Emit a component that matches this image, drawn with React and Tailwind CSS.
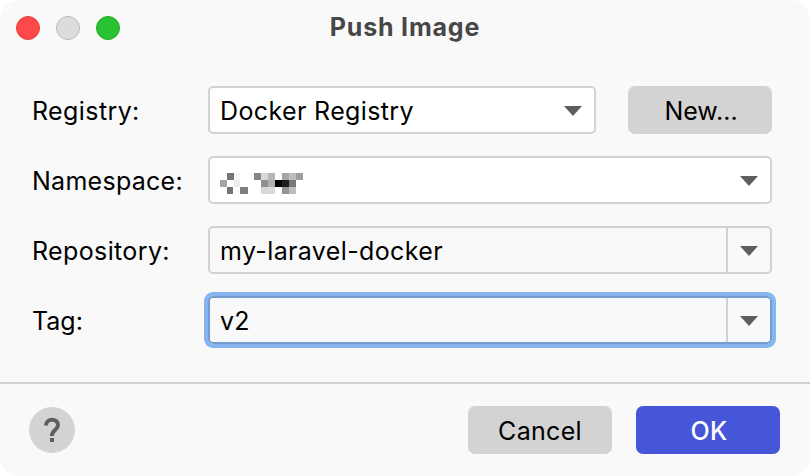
import React from 'react';

const mosaic = [
  [227, 173, 7, '#757575'], [234, 173, 6, '#f6f6f6'],
  [254, 173, 7, '#858585'], [261, 173, 7, '#d8d8d8'], [268, 173, 7, '#b5b5b5'],
  [282, 173, 7, '#a6a6a6'], [289, 173, 7, '#bdbdbd'], [296, 173, 7, '#9e9e9e'],
  [220, 180, 7, '#a5a5a5'], [234, 180, 6, '#ebebeb'],
  [261, 180, 7, '#909090'], [268, 180, 7, '#b0b0b0'], [275, 180, 7, '#000000'],
  [282, 180, 7, '#1c1c1c'], [289, 180, 7, '#777777'],
  [227, 187, 6, '#757575'], [240, 187, 8, '#7f7f7f'],
  [261, 187, 7, '#d8d8d8'], [268, 187, 7, '#dbdbdb'],
  [282, 187, 7, '#939393'], [289, 187, 7, '#bebebe'],
];

function Arrow() {
  return (
    <svg width="18" height="10" viewBox="0 0 18 10" className="block shrink-0">
      <path d="M0 0H18L9 10Z" fill="#5e5e5e" />
    </svg>
  );
}

function Row({ label, spacing, children }) {
  return (
    <div className="flex h-12 items-center">
      <span className={`w-[176px] shrink-0 pt-0.5 whitespace-nowrap ${spacing}`}>{label}</span>
      {children}
    </div>
  );
}

function Editable({ value, spacing, focused }) {
  return (
    <div
      className={`flex h-12 w-[564px] rounded-[5px] border-2 ${
        focused ? 'border-[#739dd1] shadow-[0_0_0_4px_#87b5f1]' : 'border-[#d2d2d2]'
      }`}
    >
      <span className={`flex flex-1 items-center pt-0.5 pl-2.5 ${spacing}`}>{value}</span>
      <span className="flex w-11 items-center border-l-2 border-[#d2d2d2] pt-0.5 pl-3">
        <Arrow />
      </span>
    </div>
  );
}

export default function App() {
  return (
    <div className="h-[476px] w-[810px] overflow-hidden bg-white font-['Inter',sans-serif] text-[25px] leading-[30px] text-black">
      <div className="flex h-full flex-col overflow-hidden rounded-[20px] bg-[#f9f9f9]">
        <header className="grid h-[56px] shrink-0 grid-cols-[1fr_auto_1fr] items-center px-4">
          <div className="flex gap-4">
            <span className="size-6 rounded-full border border-[#e24040] bg-[#ff4848]" />
            <span className="size-6 rounded-full border border-[#b9b9b9] bg-[#dcdcdc]" />
            <span className="size-6 rounded-full border border-[#20ab28] bg-[#2ac231]" />
          </div>
          <h1 className="pb-0.5 text-[25px] font-bold tracking-[0.8px] text-[#474747]">Push Image</h1>
          <span />
        </header>

        <main className="flex h-[326px] shrink-0 flex-col gap-[22px] pt-[30px] pl-8">
          <Row label="Registry:" spacing="tracking-[0.4px]">
            <div className="flex h-12 w-[388px] items-center justify-between rounded-[5px] border-2 border-[#d2d2d2] bg-white pt-0.5 pr-3 pl-2.5">
              <span className="tracking-[0.37px]">Docker Registry</span>
              <Arrow />
            </div>
            <button className="ml-8 h-12 w-36 rounded-[7px] bg-[#d3d3d3] pt-0.5 pl-0.5">New...</button>
          </Row>
          <Row label="Namespace:" spacing="tracking-[0.27px]">
            <div className="flex h-12 w-[564px] items-center justify-between rounded-[5px] border-2 border-[#d2d2d2] bg-white pt-0.5 pr-3 pl-2.5">
              <svg width="83" height="21" viewBox="220 173 83 21" shapeRendering="crispEdges" className="mt-[5px]">
                {mosaic.map(([x, y, w, fill]) => (
                  <rect key={`${x}-${y}`} x={x} y={y} width={w} height="7" fill={fill} />
                ))}
              </svg>
              <Arrow />
            </div>
          </Row>
          <Row label="Repository:" spacing="tracking-[0.37px]">
            <Editable value="my-laravel-docker" spacing="tracking-[0.37px]" />
          </Row>
          <Row label="Tag:" spacing="tracking-normal">
            <Editable value="v2" spacing="tracking-[0.2px]" focused />
          </Row>
        </main>

        <footer className="flex flex-1 items-start border-t-2 border-[#d2d2d2] pt-[22px] pr-[30px] pl-[29px]">
          <button aria-label="Help" className="mt-[1px] flex size-[46px] items-center justify-center rounded-full bg-[#d3d3d3]">
            <svg width="46" height="46" viewBox="0 0 46 46">
              <path d="M17 18.5C17 10.8 29 11 29 18.3C29 22.8 23 23 23 28.9" fill="none" stroke="#5e5e5e" strokeWidth="4" />
              <rect x="21" y="31" width="4" height="4" fill="#5e5e5e" />
            </svg>
          </button>
          <button className="ml-auto h-12 w-36 rounded-[7px] bg-[#d3d3d3] pt-0.5 tracking-[0.3px]">Cancel</button>
          <button className="ml-6 h-12 w-36 rounded-[7px] bg-[#4556d9] pt-0.5 pl-0.5 font-medium tracking-[0.3px] text-white">OK</button>
        </footer>
      </div>
    </div>
  );
}
